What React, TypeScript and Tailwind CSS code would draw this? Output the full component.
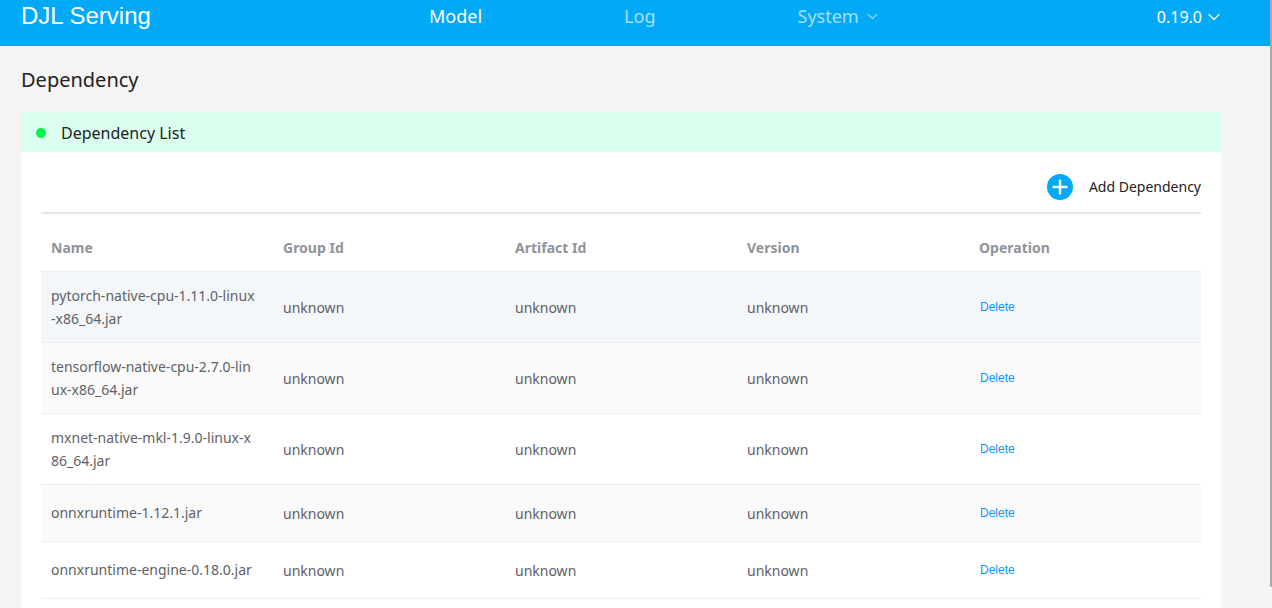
import { Plus } from "lucide-react";

type Dependency = { name: string[]; highlighted?: boolean };

const columns = ["Name", "Group Id", "Artifact Id", "Version", "Operation"];

const dependencies: Dependency[] = [
  { name: ["pytorch-native-cpu-1.11.0-linux", "-x86_64.jar"], highlighted: true },
  { name: ["tensorflow-native-cpu-2.7.0-lin", "ux-x86_64.jar"] },
  { name: ["mxnet-native-mkl-1.9.0-linux-x", "86_64.jar"] },
  { name: ["onnxruntime-1.12.1.jar"] },
  { name: ["onnxruntime-engine-0.18.0.jar"] },
];

function Chevron({ className }: { className: string }) {
  return (
    <svg viewBox="0 0 12 8" fill="none" stroke="currentColor" strokeWidth="1.2" className={className} aria-hidden="true">
      <path d="M1 1.5 6 6.5 11 1.5" strokeLinecap="round" strokeLinejoin="round" />
    </svg>
  );
}

function Header() {
  return (
    <header className="flex h-[46px] items-start bg-[#02a9f7] pl-[21px] pr-[50px] text-white">
      <div className="w-[408px] font-['Liberation_Sans',sans-serif] text-2xl leading-8">DJL Serving</div>
      <nav className="flex gap-[142px] text-lg leading-8">
        <a href="#model">Model</a>
        <a href="#log" className="text-[#a6e0fc]">Log</a>
        <a href="#system" className="flex items-center gap-2 text-[#a6e0fc]">
          System
          <Chevron className="h-[7px] w-[11px]" />
        </a>
      </nav>
      <button type="button" className="ml-auto flex items-center gap-[6px] text-base leading-[34px]">
        0.19.0
        <Chevron className="h-2 w-3" />
      </button>
    </header>
  );
}

function DependencyTable() {
  return (
    <table className="w-full table-fixed border-collapse text-left text-sm leading-[23px] text-[#606266]">
      <thead>
        <tr className="h-[57px] border-b border-[#ebeef5] text-[#909399]">
          {columns.map((column) => (
            <th key={column} className="px-[10px] pt-[10px] font-bold">{column}</th>
          ))}
        </tr>
      </thead>
      <tbody>
        {dependencies.map(({ name, highlighted }) => (
          <tr
            key={name.join("")}
            className={`border-b border-[#ebeef5] ${highlighted ? "bg-[#f3f7fa]" : "even:bg-[#fafafa]"}`}
          >
            <td className="whitespace-nowrap px-[10px] py-3">
              {name.map((line) => (
                <span key={line} className="block">{line}</span>
              ))}
            </td>
            <td className="px-[10px] pb-3 pt-[14px]">unknown</td>
            <td className="px-[10px] pb-3 pt-[14px]">unknown</td>
            <td className="px-[10px] pb-3 pt-[14px]">unknown</td>
            <td className="px-[11px] py-3">
              <button
                type="button"
                className="block h-8 font-['Liberation_Sans',sans-serif] text-xs leading-8 text-[#0a95ff]"
              >
                Delete
              </button>
            </td>
          </tr>
        ))}
      </tbody>
    </table>
  );
}

export default function App() {
  return (
    <div className="flex h-screen overflow-hidden bg-[#f4f4f4] font-['Noto_Sans',sans-serif] text-[#222]">
      <div className="flex min-w-0 flex-1 flex-col">
        <Header />
        <main className="flex flex-1 flex-col pl-[21px] pr-[49px] pt-[18px]">
          <h1 className="mb-4 text-xl leading-8">Dependency</h1>
          <section className="flex-1 bg-white">
            <h2 className="flex h-10 items-center bg-[#dcfeef] px-[15px] pt-[2px] text-base">
              <span className="mr-[15px] size-[10px] rounded-full bg-[#04f54a]" />
              Dependency List
            </h2>
            <div className="px-5">
              <div className="flex h-[62px] items-center justify-end border-b-2 border-[#e2e4ec] pt-[10px]">
                <button type="button" className="flex items-center gap-4 text-sm">
                  <span className="flex size-[26px] items-center justify-center rounded-full bg-[#02a9f7] text-white">
                    <Plus className="size-[22px]" strokeWidth={2.6} />
                  </span>
                  Add Dependency
                </button>
              </div>
              <DependencyTable />
            </div>
          </section>
        </main>
      </div>
      <div className="mb-[21px] w-[2px] rounded-b-sm bg-[#a8a8a8]" />
    </div>
  );
}
